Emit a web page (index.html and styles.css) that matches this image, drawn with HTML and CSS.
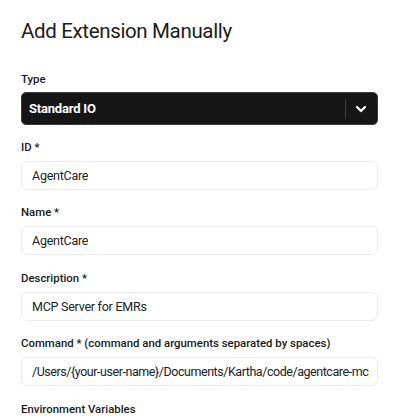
FILE: index.html
```html
<!DOCTYPE html>
<html>
<head>
<meta charset="utf-8">
<link rel="stylesheet" href="styles.css">
</head>
<body>
<div class="page">
  <h1 class="title">Add Extension Manually</h1>
  <div class="form">
    <div class="field field-select">
      <label class="label">Type</label>
      <div class="select">
        <span class="select-value">Standard IO</span>
        <span class="select-divider"></span>
        <svg class="chevron" width="12" height="8" viewBox="0 0 12 8"><path d="M2 2 L6 6 L10 2" fill="none" stroke="#fff" stroke-width="2.2" stroke-linecap="round" stroke-linejoin="round"/></svg>
      </div>
    </div>
    <div class="field">
      <label class="label">ID *</label>
      <div class="input"><span class="input-text">AgentCare</span></div>
    </div>
    <div class="field">
      <label class="label">Name *</label>
      <div class="input"><span class="input-text">AgentCare</span></div>
    </div>
    <div class="field">
      <label class="label">Description *</label>
      <div class="input"><span class="input-text">MCP Server for EMRs</span></div>
    </div>
    <div class="field">
      <label class="label">Command * (command and arguments separated by spaces)</label>
      <div class="input input-long"><span class="input-text">/Users/{your-user-name}/Documents/Kartha/code/agentcare-mcp/build/index.js</span></div>
    </div>
    <div class="field">
      <label class="label">Environment Variables</label>
    </div>
  </div>
</div>
</body>
</html>
```

FILE: styles.css
```css
html, body {
  margin: 0;
  padding: 0;
  background: #ffffff;
}
body {
  font-family: Roboto, "Liberation Sans", Arial, sans-serif;
  color: #1a1a1a;
}
.page {
  padding: 17px 22px 0 21px;
}
.title {
  margin: 0 0 26px 0;
  font-size: 20.5px;
  line-height: 28px;
  font-weight: 400;
  color: #1c1c1c;
  letter-spacing: -0.35px;
}
.form {
  display: flex;
  flex-direction: column;
  gap: 14.5px;
}
.field {
  display: flex;
  flex-direction: column;
  gap: 6px;
}
.field-select {
  gap: 5px;
  margin-bottom: -1px;
}
.label {
  font-size: 11.4px;
  line-height: 16px;
  font-weight: 500;
  color: #1a1a1a;
}
.select {
  display: flex;
  align-items: center;
  height: 31px;
  background: #161616;
  border: 1px solid #3c3c3c;
  border-radius: 5px;
  padding: 0 10px 0 7px;
}
.select-value {
  flex: 1;
  color: #ffffff;
  font-size: 13px;
  font-weight: 700;
  letter-spacing: -0.2px;
}
.select-divider {
  width: 1px;
  height: 20px;
  background: #3a3a3a;
  margin-right: 9px;
}
.chevron {
  display: block;
}
.input {
  height: 27px;
  border: 1px solid #ececec;
  border-radius: 6px;
  padding: 0 8px 0 10px;
  display: flex;
  align-items: center;
  font-size: 12.5px;
  color: #222;
  white-space: nowrap;
  overflow: hidden;
  letter-spacing: -0.25px;
}
.input-long {
  letter-spacing: -0.45px;
}
.input-text {
  overflow: hidden;
}
```
